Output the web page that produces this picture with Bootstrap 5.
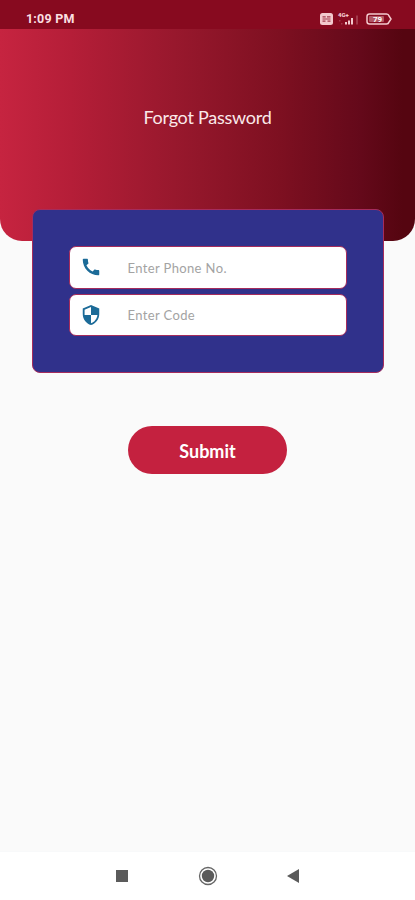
<!DOCTYPE html>
<html lang="en">
<head>
<meta charset="utf-8">
<meta name="viewport" content="width=device-width, initial-scale=1">
<title>Forgot Password</title>
<link href="https://cdn.jsdelivr.net/npm/bootstrap@5.3.0/dist/css/bootstrap.min.css" rel="stylesheet">
<style>
  body { height: 900px; background: #fafafa; font-family: Lato, "Noto Sans", sans-serif; }
  .status-bar { height: 29px; padding: 8px 22px 0 26px; background: #870a1f; color: #fbdfe1; font: 700 12.5px/22px Roboto, sans-serif; letter-spacing: .2px; }
  .status-bar svg { margin-top: 3px; letter-spacing: 0; }
  .hero { height: 212px; padding-top: 76px; border-radius: 0 0 22px 22px; background: linear-gradient(90deg, #c62440 0%, #b51e38 17%, #98182d 42%, #7e1021 67%, #64091a 87%, #550510 97%); }
  .hero h1 { font-size: 18px; line-height: 25px; letter-spacing: -.25px; color: #fbe9ea; }
  .form-panel { width: 352px; height: 164px; margin: -32px 0 0 32px; padding: 36px; background: #30318b; border: 1px solid #a52c5c; border-radius: 8px; gap: 5px; }
  .field { height: 43px; border: 1px solid #a52c5c; border-radius: 7px; overflow: hidden; background: #fff; }
  .field .input-group-text { width: 46px; padding: 0 0 0 10px; }
  .field .form-control { font-size: 13px; padding: 1px 12px 0 12.5px; letter-spacing: .37px; line-height: 20px; }
  .field .form-control::placeholder { color: #a3a3a3; }
  .submit { width: 159px; height: 48px; margin-top: 53px; padding: 2px 0 0; background: #c4213f; color: #fff; font-size: 18px; font-weight: 700; }
  .submit:hover { background: #b01c37; color: #fff; }
  .system-nav { height: 49px; background: #fff; padding: 0 115px; }
</style>
</head>
<body class="d-flex flex-column overflow-hidden">
  <header class="status-bar d-flex justify-content-between flex-shrink-0">
    <span>1:09 PM</span>
    <svg width="74" height="16" viewBox="319 11 74 16" fill="#f3c9cd">
      <rect x="320" y="13" width="13" height="12" rx="2.5"/>
      <path d="M322.5 16.8h3.2M327 16.8h3.5M322.5 21.2h3M327.5 21.2h3M322.5 19h8" stroke="#a23b4c" stroke-width="1.2"/>
      <text x="338" y="17" font-family="Roboto, sans-serif" font-size="6" font-weight="900">4G+</text>
      <path d="M345 22h2v2.5h-2zM348 20.5h2v4h-2zM351 18h2v6.5h-2z"/>
      <path d="M356 15.5h2v9h-2zM339 20h1.5v1.5H339zM341 23h1.5v1.5H341z" opacity=".25"/>
      <path d="M369.500 14h17q2 0 2.500 2l2 3-2 3q-.5 2-2.500 2h-17q-2.500 0-2.500-2.500v-5q0-2.500 2.500-2.500z" fill="none" stroke="#f3c9cd" stroke-width="1.500"/>
      <rect x="369" y="16" width="15" height="6" rx="1" opacity=".4"/>
      <text x="373" y="22" font-family="Roboto, sans-serif" font-size="8" font-weight="700" fill="#fff">79</text>
    </svg>
  </header>
  <section class="hero text-center flex-shrink-0">
    <h1 class="m-0 fw-normal">Forgot Password</h1>
  </section>
  <form class="flex-grow-1 d-flex flex-column">
    <div class="form-panel d-flex flex-column flex-shrink-0">
      <div class="field input-group flex-nowrap">
        <span class="input-group-text bg-transparent border-0">
          <svg width="22" height="22" viewBox="0 0 24 24" fill="#1c6b98"><path d="M20.010 15.380c-1.230 0-2.420-.2-3.530-.560-.350-.120-.740-.030-1.010.240l-1.570 1.970c-2.830-1.350-5.480-3.900-6.890-6.830l1.950-1.660c.270-.280.350-.670.240-1.020-.370-1.110-.560-2.300-.560-3.530 0-.540-.450-.990-.990-.990H4.190C3.650 3 3 3.240 3 3.990 3 13.280 10.730 21 20.010 21c.710 0 .990-.630.990-1.180v-3.450c0-.540-.450-.990-.990-.990z"/></svg>
        </span>
        <input class="form-control border-0 shadow-none bg-transparent" type="tel" placeholder="Enter Phone No." aria-label="Phone number">
      </div>
      <div class="field input-group flex-nowrap">
        <span class="input-group-text bg-transparent border-0">
          <svg width="22" height="22" viewBox="0 0 24 24" fill="#1c6b98"><path d="M12 1L3 5v6c0 5.550 3.840 10.740 9 12 5.160-1.260 9-6.450 9-12V5l-9-4zm0 10.990h7c-.530 4.120-3.280 7.790-7 8.940V12H5V6.300l7-3.110v8.800z"/></svg>
        </span>
        <input class="form-control border-0 shadow-none bg-transparent" type="text" placeholder="Enter Code" aria-label="Code">
      </div>
    </div>
    <button class="btn submit rounded-pill border-0 align-self-center flex-shrink-0" type="button">Submit</button>
  </form>
  <nav class="system-nav d-flex justify-content-between align-items-center flex-shrink-0 border-top border-light">
    <svg width="14" height="14"><rect x="1" y="1" width="12" height="12" fill="#5b5b5b"/></svg>
    <svg width="20" height="20" fill="none"><circle cx="10" cy="10" r="8.500" stroke="#666" stroke-width="1.300"/><circle cx="10" cy="10" r="6.200" fill="#5b5b5b"/></svg>
    <svg width="14" height="14" fill="#5b5b5b"><path d="M13 0v14L1 7z"/></svg>
  </nav>
<script src="https://cdn.jsdelivr.net/npm/bootstrap@5.3.0/dist/js/bootstrap.bundle.min.js"></script>
</body>
</html>
